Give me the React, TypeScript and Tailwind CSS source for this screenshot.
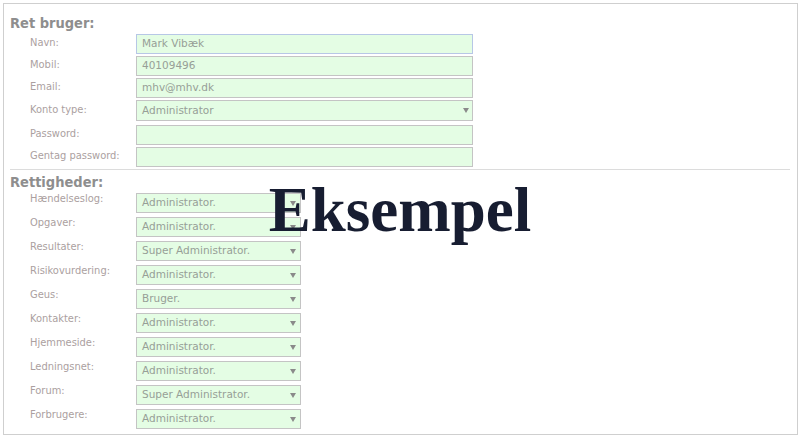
const font = { fontFamily: '"DejaVu Sans Condensed", "DejaVu Sans", Verdana, sans-serif' };
const fieldFont = { fontFamily: '"DejaVu Sans", Verdana, sans-serif' };

const userFields = [
  { label: "Navn:", value: "Mark Vibæk", focus: true },
  { label: "Mobil:", value: "40109496" },
  { label: "Email:", value: "mhv@mhv.dk" },
  { label: "Konto type:", value: "Administrator", select: true },
  { label: "Password:", value: "" },
  { label: "Gentag password:", value: "" },
];

const rights = [
  ["Hændelseslog:", "Administrator."],
  ["Opgaver:", "Administrator."],
  ["Resultater:", "Super Administrator."],
  ["Risikovurdering:", "Administrator."],
  ["Geus:", "Bruger."],
  ["Kontakter:", "Administrator."],
  ["Hjemmeside:", "Administrator."],
  ["Ledningsnet:", "Administrator."],
  ["Forum:", "Super Administrator."],
  ["Forbrugere:", "Administrator."],
];

const Arrow = () => (
  <svg width="6" height="5" viewBox="0 0 6 5" className="shrink-0">
    <path d="M0 0 L6 0 L3 5 Z" fill="#8a8a8a" />
  </svg>
);

const App = () => {
  return (
    <div className="relative w-[800px] h-[436px] bg-white p-[3px]" style={font}>
      <div className="h-[432px] w-[795px] border border-[#cfcfcf] pl-[6px] pr-[6px] pt-[11px]">
        <h2 className="text-[14.5px] leading-[17px] font-bold text-[#8e8e8e]">Ret bruger:</h2>
        <div className="flex flex-col gap-[3px] pl-[20px] pt-[2px]">
          {userFields.map((f) => (
            <div key={f.label} className={"flex items-center " + (f.select ? "h-[21px] mb-[1px]" : "h-[19px]")}>
              <div className="w-[106px] text-[11px] text-[#ab9f9f]">{f.label}</div>
              <div
                className={
                  "w-[337px] bg-[#e4fde4] border flex items-center justify-between pl-[5px] pr-[3px] text-[10.5px] text-[#979f97] " +
                  (f.focus ? "border-[#b7c7e6] " : "border-[#c4c4c4] ") +
                  (f.select ? "h-[21px]" : "h-[20px]")
                }
                style={fieldFont}
              >
                <span>{f.value}</span>
                {f.select && <Arrow />}
              </div>
            </div>
          ))}
        </div>
        <div className="h-px bg-[#dcdcdc] mt-[3px] mr-[1px]" />
        <h2 className="text-[14.5px] leading-[17px] font-bold text-[#8e8e8e] mt-[4px]">Rettigheder:</h2>
        <div className="flex flex-col gap-[4px] pl-[20px] pt-[1px]">
          {rights.map(([label, value]) => (
            <div key={label} className="flex items-start h-[20px]">
              <div className="w-[106px] text-[11px] text-[#ab9f9f] leading-[13px]">{label}</div>
              <div
                className="w-[165px] h-[20px] mt-[1px] bg-[#e4fde4] border border-[#c4c4c4] flex items-center justify-between pl-[5px] pr-[4px] text-[10.5px] text-[#979f97]"
                style={fieldFont}
              >
                <span>{value}</span>
                <Arrow />
              </div>
            </div>
          ))}
        </div>
      </div>
      <div
        className="absolute left-0 right-0 top-[172px] text-center text-[63px] font-bold leading-[76px] text-[#171d31]"
        style={{ fontFamily: '"Liberation Serif", "Times New Roman", serif' }}
      >
        Eksempel
      </div>
    </div>
  );
};

export default App;
